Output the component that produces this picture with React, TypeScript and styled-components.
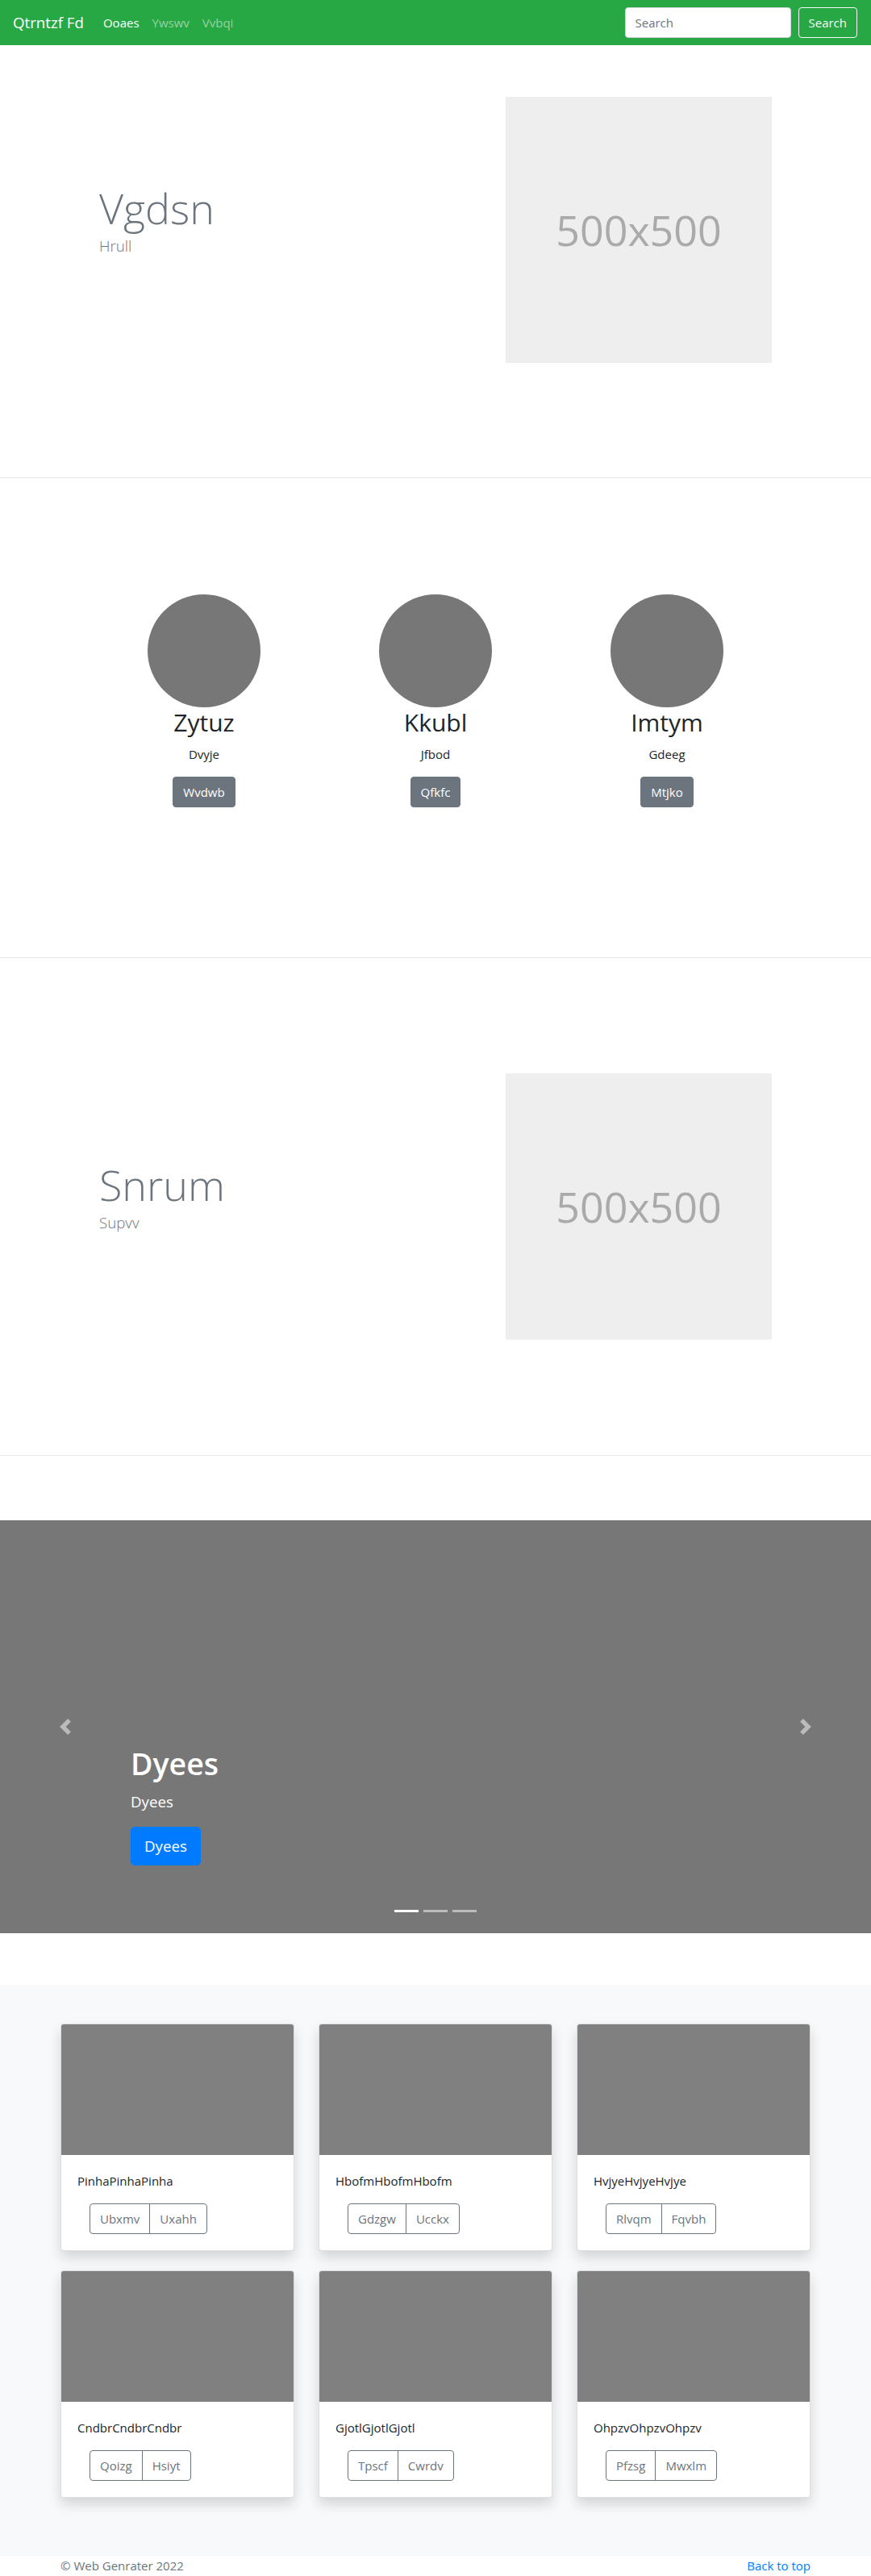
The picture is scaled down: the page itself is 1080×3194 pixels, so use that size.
import styled, { createGlobalStyle } from "styled-components";

const team = [
  { name: "Zytuz", role: "Dvyje", action: "Wvdwb" },
  { name: "Kkubl", role: "Jfbod", action: "Qfkfc" },
  { name: "Imtym", role: "Gdeeg", action: "Mtjko" },
];

const cards = [
  { title: "PinhaPinhaPinha", buttons: ["Ubxmv", "Uxahh"] },
  { title: "HbofmHbofmHbofm", buttons: ["Gdzgw", "Ucckx"] },
  { title: "HvjyeHvjyeHvjye", buttons: ["Rlvqm", "Fqvbh"] },
  { title: "CndbrCndbrCndbr", buttons: ["Qoizg", "Hsiyt"] },
  { title: "GjotlGjotlGjotl", buttons: ["Tpscf", "Cwrdv"] },
  { title: "OhpzvOhpzvOhpzv", buttons: ["Pfzsg", "Mwxlm"] },
];

const App = () => {
  return (
    <>
      <GlobalStyle />
      <Navbar>
        <Brand>Qtrntzf Fd</Brand>
        <NavLinks>
          <NavLink $active>Ooaes</NavLink>
          <NavLink>Ywswv</NavLink>
          <NavLink>Vvbqi</NavLink>
        </NavLinks>
        <SearchForm>
          <SearchInput placeholder="Search" />
          <OutlineLightButton>Search</OutlineLightButton>
        </SearchForm>
      </Navbar>

      <FeatureSection $top={64} $bottom={142}>
        <FeatureText>
          <DisplayTitle>Vgdsn</DisplayTitle>
          <Lead>Hrull</Lead>
        </FeatureText>
        <FeatureMedia>
          <Placeholder>500x500</Placeholder>
        </FeatureMedia>
      </FeatureSection>

      <TeamSection>
        <TeamGrid>
          {team.map((member) => (
            <TeamMember key={member.name}>
              <Avatar />
              <MemberName>{member.name}</MemberName>
              <MemberRole>{member.role}</MemberRole>
              <SecondaryButton>{member.action}</SecondaryButton>
            </TeamMember>
          ))}
        </TeamGrid>
      </TeamSection>

      <FeatureSection $top={143} $bottom={143}>
        <FeatureText>
          <DisplayTitle>Snrum</DisplayTitle>
          <Lead>Supvv</Lead>
        </FeatureText>
        <FeatureMedia>
          <Placeholder>500x500</Placeholder>
        </FeatureMedia>
      </FeatureSection>

      <Carousel>
        <CarouselControl $side="left">
          <svg width="20" height="20" viewBox="0 0 8 8" fill="#fff">
            <path d="M5.25 0l-4 4 4 4 1.5-1.5L4.25 4l2.5-2.5L5.25 0z" />
          </svg>
        </CarouselControl>
        <CarouselControl $side="right">
          <svg width="20" height="20" viewBox="0 0 8 8" fill="#fff">
            <path d="M2.75 0l-1.5 1.5L3.75 4l-2.5 2.5L2.75 8l4-4-4-4z" />
          </svg>
        </CarouselControl>
        <Caption>
          <CaptionTitle>Dyees</CaptionTitle>
          <CaptionText>Dyees</CaptionText>
          <PrimaryButton>Dyees</PrimaryButton>
        </Caption>
        <Indicators>
          <Indicator $active />
          <Indicator />
          <Indicator />
        </Indicators>
      </Carousel>

      <Album>
        <CardGrid>
          {cards.map((card) => (
            <Card key={card.title}>
              <CardThumb />
              <CardBody>
                <CardText>{card.title}</CardText>
                <ButtonGroup>
                  {card.buttons.map((label) => (
                    <GroupButton key={label}>{label}</GroupButton>
                  ))}
                </ButtonGroup>
              </CardBody>
            </Card>
          ))}
        </CardGrid>
      </Album>

      <Footer>
        <span>© Web Genrater 2022</span>
        <FooterLink>Back to top</FooterLink>
      </Footer>
    </>
  );
};

export default App;

/* ================= STYLES ================= */

// Open Sans runs wider than the original UI font, so sizes are ~0.94x with line heights kept
const GlobalStyle = createGlobalStyle`
  *, *::before, *::after { box-sizing: border-box; }
  body {
    margin: 0;
    font-family: "Open Sans", "Noto Sans", sans-serif;
    font-size: 15px;
    line-height: 24px;
    color: #212529;
    background: #fff;
  }
  h1, h2, p { margin: 0; }
  button, input { font-family: inherit; }
`;

const Navbar = styled.nav`
  height: 56px;
  background: #28a745;
  display: flex;
  align-items: center;
  padding: 0 16px;
`;

const Brand = styled.div`
  color: #fff;
  font-size: 18.7px;
  line-height: 30px;
  margin-right: 16px;
`;

const NavLinks = styled.div`
  display: flex;
`;

const NavLink = styled.a<{ $active?: boolean }>`
  padding: 8px;
  color: ${(p) => (p.$active ? "#fff" : "rgba(255, 255, 255, 0.5)")};
  cursor: pointer;
`;

const SearchForm = styled.form`
  margin-left: auto;
  margin-right: 1px;
  display: flex;
  gap: 9px;
`;

const SearchInput = styled.input`
  width: 206px;
  height: 38px;
  padding: 6px 12px;
  font-size: 15px;
  border: 1px solid #ced4da;
  border-radius: 4px;
  color: #495057;
  &::placeholder { color: #6c757d; }
`;

const OutlineLightButton = styled.button`
  height: 38px;
  padding: 6px 12px;
  font-size: 15px;
  line-height: 24px;
  background: transparent;
  color: #f8f9fa;
  border: 1px solid #f8f9fa;
  border-radius: 4px;
`;

const FeatureSection = styled.section<{ $top: number; $bottom: number }>`
  display: flex;
  align-items: flex-start;
  padding: ${(p) => p.$top}px calc((100% - 960px) / 2) ${(p) => p.$bottom}px;
  border-bottom: 1px solid #e6e6e6;
`;

const FeatureText = styled.div`
  width: 50%;
  padding: 106px 63px 0;
`;

const DisplayTitle = styled.h1`
  font-size: 52px;
  font-weight: 300;
  line-height: 64px;
  color: #6c757d;
`;

const Lead = styled.p`
  font-size: 18.7px;
  font-weight: 300;
  line-height: 30px;
  color: #6c757d;
`;

const FeatureMedia = styled.div`
  width: 50%;
  display: flex;
  justify-content: flex-end;
  padding-right: 63px;
`;

const Placeholder = styled.div`
  width: 330px;
  height: 330px;
  background: #eee;
  color: #aaa;
  font-size: 52px;
  display: flex;
  align-items: center;
  justify-content: center;
`;

const TeamSection = styled.section`
  padding: 144px 0 186px;
  border-bottom: 1px solid #e6e6e6;
`;

const TeamGrid = styled.div`
  display: grid;
  grid-template-columns: repeat(3, 287px);
  justify-content: center;
`;

const TeamMember = styled.div`
  display: flex;
  flex-direction: column;
  align-items: center;
  text-align: center;
`;

const Avatar = styled.div`
  width: 140px;
  height: 140px;
  border-radius: 50%;
  background: #777;
`;

const MemberName = styled.h2`
  font-size: 30px;
  font-weight: 400;
  line-height: 38.4px;
  margin-bottom: 8px;
`;

const MemberRole = styled.p`
  margin-bottom: 16px;
`;

const SecondaryButton = styled.button`
  height: 38px;
  padding: 6px 12px;
  font-size: 15px;
  line-height: 24px;
  color: #fff;
  background: #6c757d;
  border: 1px solid #6c757d;
  border-radius: 4px;
`;

const Carousel = styled.section`
  position: relative;
  height: 512px;
  margin: 80px 0 64px;
  background: #777;
`;

const CarouselControl = styled.div<{ $side: "left" | "right" }>`
  position: absolute;
  top: 0;
  bottom: 0;
  ${(p) => p.$side}: 0;
  width: 15%;
  display: flex;
  align-items: center;
  justify-content: center;
  opacity: 0.5;
`;

const Caption = styled.div`
  position: absolute;
  left: 15%;
  right: 15%;
  bottom: 48px;
  padding-bottom: 20px;
  color: #fff;
`;

const CaptionTitle = styled.h1`
  font-size: 37.5px;
  font-weight: 600;
  line-height: 48px;
  margin-bottom: 8px;
`;

const CaptionText = styled.p`
  font-size: 18.7px;
  line-height: 30px;
  margin-bottom: 16px;
`;

const PrimaryButton = styled.button`
  height: 48px;
  padding: 8px 16px;
  font-size: 18.7px;
  line-height: 30px;
  color: #fff;
  background: #007bff;
  border: 1px solid #007bff;
  border-radius: 5px;
  margin-bottom: 16px;
`;

const Indicators = styled.div`
  position: absolute;
  left: 0;
  right: 0;
  bottom: 26px;
  display: flex;
  justify-content: center;
  gap: 6px;
`;

const Indicator = styled.span<{ $active?: boolean }>`
  width: 30px;
  height: 3px;
  background: #fff;
  opacity: ${(p) => (p.$active ? 1 : 0.5)};
`;

const Album = styled.section`
  background: #f8f9fa;
  padding: 48px 0 72px;
`;

const CardGrid = styled.div`
  display: grid;
  grid-template-columns: repeat(3, 290px);
  column-gap: 30px;
  row-gap: 24px;
  justify-content: center;
`;

const Card = styled.div`
  background: #fff;
  border: 1px solid rgba(0, 0, 0, 0.125);
  border-radius: 4px;
  overflow: hidden;
  box-shadow: 0 8px 16px rgba(0, 0, 0, 0.15);
`;

const CardThumb = styled.div`
  height: 162px;
  background: #808080;
`;

const CardBody = styled.div`
  padding: 20px;
`;

const CardText = styled.p`
  margin-bottom: 16px;
`;

const ButtonGroup = styled.div`
  display: inline-flex;
  margin-left: 15px;
`;

const GroupButton = styled.button`
  height: 38px;
  padding: 6px 12px;
  font-size: 15px;
  line-height: 24px;
  color: #6c757d;
  background: transparent;
  border: 1px solid #6c757d;
  border-radius: 0;
  & + & { margin-left: -1px; }
  &:first-child { border-radius: 4px 0 0 4px; }
  &:last-child { border-radius: 0 4px 4px 0; }
`;

const Footer = styled.footer`
  width: 930px;
  margin: 0 auto;
  height: 24px;
  display: flex;
  justify-content: space-between;
  color: #6c757d;
`;

const FooterLink = styled.a`
  color: #007bff;
  cursor: pointer;
`;
